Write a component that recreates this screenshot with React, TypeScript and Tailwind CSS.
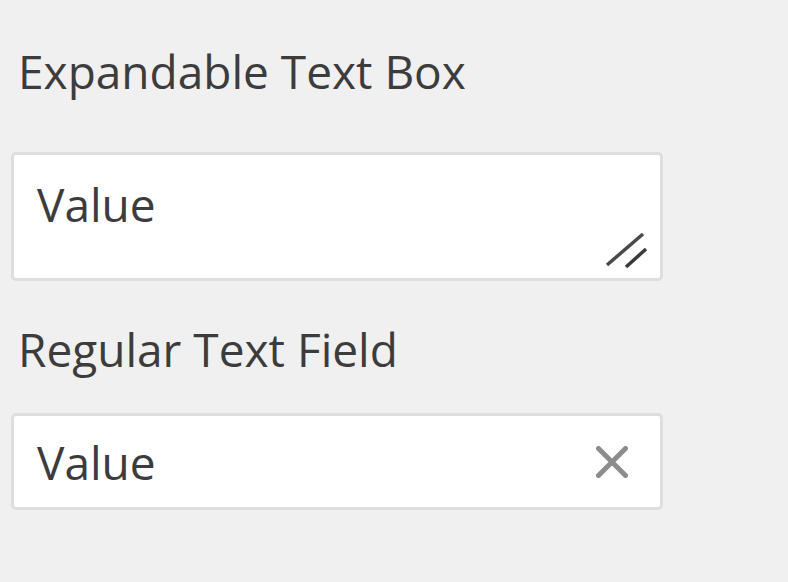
const ResizeHandle = () => (
  <svg
    className="absolute left-[589px] top-[75px]"
    width="50"
    height="42"
    viewBox="0 0 50 42"
    fill="none"
  >
    <line x1="4" y1="35" x2="40" y2="4" stroke="#4a4a4a" strokeWidth="3.5" />
    <line x1="23" y1="37" x2="43" y2="19" stroke="#3a3a3a" strokeWidth="3.5" />
  </svg>
);

const ClearIcon = () => (
  <svg width="32" height="32" viewBox="0 0 32 32" fill="none">
    <path
      d="M2.5 2.5 L29.5 29.5 M29.5 2.5 L2.5 29.5"
      stroke="#8c8c8c"
      strokeWidth="5"
      strokeLinecap="round"
    />
  </svg>
);

const App = () => {
  return (
    <div
      className="min-h-screen bg-[#f0f0f0] pl-[11px] pt-[40px] text-[#3c3c3c]"
      style={{ fontFamily: '"Open Sans", "Noto Sans", sans-serif' }}
    >
      <div className="w-[652px]">
        <div className="pl-[7px] text-[46px] leading-[62px]">Expandable Text Box</div>

        <div className="relative mt-[50px] h-[129px] rounded-[5px] border-[3px] border-[#dedede] bg-white pl-[23px] pt-[18px]">
          <div className="text-[46px] leading-[62px]">Value</div>
          <ResizeHandle />
        </div>

        <div className="mt-[37px] pl-[7px] text-[46px] leading-[62px]">Regular Text Field</div>

        <div className="mt-[33px] flex h-[97px] items-center justify-between rounded-[5px] border-[3px] border-[#dedede] bg-white pl-[23px] pr-[32px]">
          <span className="text-[46px] leading-[62px]">Value</span>
          <ClearIcon />
        </div>
      </div>
    </div>
  );
};

export default App;
